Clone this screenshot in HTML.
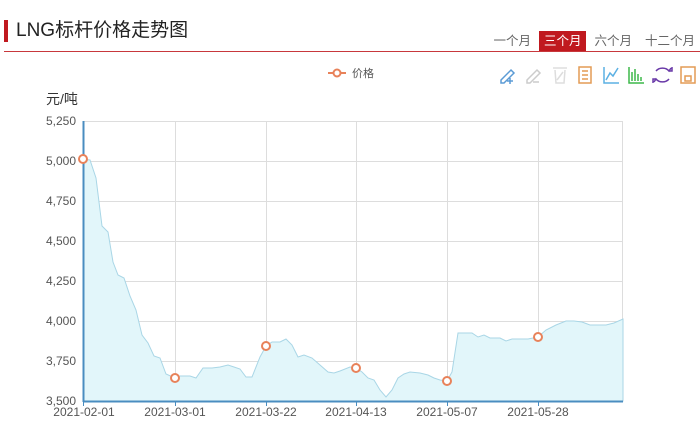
<!DOCTYPE html>
<html><head><meta charset="utf-8"><style>
body{margin:0;width:700px;height:433px;background:#fff;font-family:"Liberation Sans","Noto Sans CJK SC",sans-serif;overflow:hidden;position:relative}
.t{position:absolute;left:4px;top:20px;height:22px;border-left:4px solid #c0191f;padding-left:8px;font-size:19px;line-height:22px;color:#222}
.hr{position:absolute;left:4px;right:0;top:51px;height:1px;background:#c8383c}
.tabs{position:absolute;top:31px;right:0;display:flex;font-size:12.5px;color:#666}
.tabs span{padding:0 5px;height:20px;line-height:20px;margin-left:3px}
.tabs .a{background:#c0191f;color:#fff}
</style></head><body>
<div class="t">LNG标杆价格走势图</div>
<div class="hr"></div>
<div class="tabs"><span>一个月</span><span class="a">三个月</span><span>六个月</span><span>十二个月</span></div>
<svg width="700" height="433" style="position:absolute;left:0;top:0" font-family="Liberation Sans,Noto Sans CJK SC,sans-serif">
<g stroke="#e8825a" stroke-width="2" fill="#fff"><line x1="328" y1="73" x2="346" y2="73"/><circle cx="337" cy="73" r="3.5"/></g>
<text x="352" y="77" font-size="11" fill="#555">价格</text>
<g fill="none" stroke-width="1.5">
<path d="M501 80l10-10 3 3-10 10h-3z M510 78v6 M507 81h6" stroke="#5b9bd5"/>
<path d="M527 80l10-10 3 3-10 10h-3z M533 82h6" stroke="#ccc"/>
<path d="M553 68h14 M555 70l1 13h8l1-13 M557 80l6-8" stroke="#ddd"/>
<rect x="579" y="67" width="12" height="16" stroke="#e39b55"/><path d="M582 71h6M582 75h6M582 79h6" stroke="#e39b55"/>
<path d="M604 67v16h15 M606 80l4-7 3 3 5-8" stroke="#5bb0e3"/>
<path d="M629 67v16h15 M632 81v-9M635 81v-12M638 81v-7M641 81v-4" stroke="#3db84a"/>
<path d="M656 71a8 7 0 0 1 13 0l2-3 M669 79a8 7 0 0 1-13 0l-2 3 M669 71h3v-4 M656 79h-3v4" stroke="#6a3aa8"/>
<rect x="681" y="67" width="14" height="16" stroke="#e39b55"/><rect x="685" y="76" width="6" height="5" stroke="#e39b55"/>
</g>
<text x="46" y="104" font-size="14" fill="#333">元/吨</text>
<g stroke="#ddd" stroke-width="1">
<path d="M83 121.5H623M83 161.5H623M83 201.5H623M83 241.5H623M83 281.5H623M83 321.5H623M83 361.5H623"/>
<path d="M175.5 121V401M266.5 121V401M356.5 121V401M447.5 121V401M538.5 121V401M622.5 121V401"/>
</g>
<g font-size="12" fill="#555" text-anchor="end">
<text x="76" y="125">5,250</text><text x="76" y="165">5,000</text><text x="76" y="205">4,750</text><text x="76" y="245">4,500</text><text x="76" y="285">4,250</text><text x="76" y="325">4,000</text><text x="76" y="365">3,750</text><text x="76" y="405">3,500</text>
</g>
<path fill="#e2f6fa" stroke="#a9d6e6" stroke-width="1" d="M83 159L90 160L96 178L102 226L108 232L113 262L118 275L124 278L130 296L136 310L142 335L148 343L154 356L160 358L166 374L175 378L180 376L190 376L196 378L203 368L212 368L220 367L228 365L234 367L240 369L246 377L252 377L260 357L266 346L272 342L280 342L286 339L292 345L298 357L304 355L312 358L320 365L328 372L334 373L340 371L350 367L356 368L362 372L368 378L374 380L380 390L386 397L392 390L398 378L404 374L410 372L420 373L428 375L434 378L440 380L447 381L452 372L458 333L466 333L472 333L478 337L484 335L490 338L500 338L506 341L512 339L520 339L528 339L538 337L546 330L556 325L566 321L574 321L582 322L590 325L598 325L606 325L614 323L623 319L623 401L83 401Z"/>
<path d="M83.5 121V402M83 401.5H623" stroke="#4a8dc0" stroke-width="2" fill="none"/>
<g stroke="#4a8dc0"><path d="M83.5 401v5M175.5 401v5M266.5 401v5M356.5 401v5M447.5 401v5M538.5 401v5"/></g>
<g stroke="#e8825a" stroke-width="2" fill="#fff">
<circle cx="83" cy="159" r="4"/><circle cx="175" cy="378" r="4"/><circle cx="266" cy="346" r="4"/><circle cx="356" cy="368" r="4"/><circle cx="447" cy="381" r="4"/><circle cx="538" cy="337" r="4"/>
</g>
<g font-size="12" fill="#555" text-anchor="middle">
<text x="84" y="416">2021-02-01</text><text x="175" y="416">2021-03-01</text><text x="266" y="416">2021-03-22</text><text x="356" y="416">2021-04-13</text><text x="447" y="416">2021-05-07</text><text x="538" y="416">2021-05-28</text>
</g>
</svg>
</body></html>
